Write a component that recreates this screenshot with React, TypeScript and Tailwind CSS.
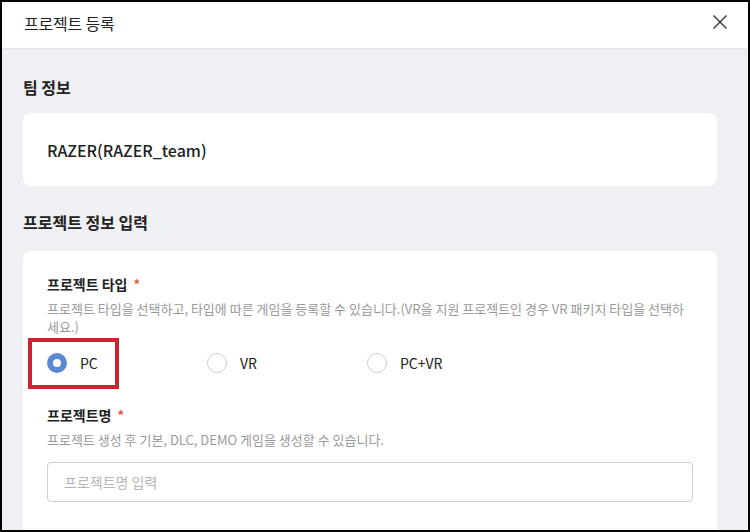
import React from 'react';

const font = { fontFamily: '"Noto Sans CJK KR", "Noto Sans", sans-serif' };

const types = ['PC', 'VR', 'PC+VR'];

const Required = () => <span className="ml-[6px] text-[13px] text-[#e0573f] align-top">*</span>;

export default function App() {
    const selected = 'PC';

    return (
        <div className="w-[750px] h-[532px] border-2 border-black overflow-hidden flex flex-col bg-[#eff0f3] text-[#222]" style={font}>
            {/* Modal header */}
            <header className="h-[47px] shrink-0 bg-white border-b border-[#e4e5e9] flex items-start justify-between pl-[22px] pr-[16px] pt-[9px]">
                <h1 className="text-[16px] leading-6 font-normal tracking-[-0.2px]">프로젝트 등록</h1>
                <button className="w-6 h-6 flex items-center justify-center mt-[-1px]">
                    <svg width="16" height="16" viewBox="0 0 16 16" fill="none" stroke="#333" strokeWidth="1.4">
                        <path d="M1.5 1.5 L14.5 14.5 M14.5 1.5 L1.5 14.5" />
                    </svg>
                </button>
            </header>

            <main className="flex-1 px-[21px] pt-[26px] pr-[31px]">
                <h2 className="text-[16px] leading-6 font-semibold">팀 정보</h2>
                <div className="mt-[14px] h-[73px] bg-white rounded-lg px-6 flex items-center">
                    <span className="text-[16px] font-medium pt-[1px]">RAZER(RAZER_team)</span>
                </div>

                <h2 className="mt-[24px] text-[16px] leading-6 font-semibold">프로젝트 정보 입력</h2>
                <div className="mt-[17px] bg-white rounded-t-lg px-6 pt-[23px] pb-8">
                    <div className="text-[14px] leading-5 font-bold">
                        프로젝트 타입<Required />
                    </div>
                    <p className="mt-[6px] text-[13px] leading-[18px] text-[#999]">
                        프로젝트 타입을 선택하고, 타입에 따른 게임을 등록할 수 있습니다.(VR을 지원 프로젝트인 경우 VR 패키지 타입을 선택하세요.)
                    </p>

                    <div className="mt-[7px] h-10 flex items-center">
                        {types.map((t) => (
                            <label key={t} className="relative w-[160px] flex items-center gap-[13px] text-[14px]">
                                {t === selected ? (
                                    <span className="w-5 h-5 rounded-full bg-[#5b87d2] flex items-center justify-center">
                                        <span className="w-[8px] h-[8px] rounded-full bg-white" />
                                    </span>
                                ) : (
                                    <span className="w-5 h-5 rounded-full border border-[#cfcfcf] bg-white" />
                                )}
                                <span>{t}</span>
                                {t === selected && (
                                    <span className="absolute left-[-19px] top-[-15px] w-[91px] h-[51px] border-[4px] border-[#d2202f] pointer-events-none" />
                                )}
                            </label>
                        ))}
                    </div>

                    <div className="mt-[22px] text-[14px] leading-5 font-bold">
                        프로젝트명<Required />
                    </div>
                    <p className="mt-[6px] text-[13px] leading-[18px] text-[#999]">
                        프로젝트 생성 후 기본, DLC, DEMO 게임을 생성할 수 있습니다.
                    </p>
                    <input
                        className="mt-[13px] w-full h-10 border border-[#cfcfcf] rounded px-4 text-[14px] outline-none placeholder:text-[#b5b5b5]"
                        placeholder="프로젝트명 입력"
                    />
                </div>
            </main>
        </div>
    );
}
